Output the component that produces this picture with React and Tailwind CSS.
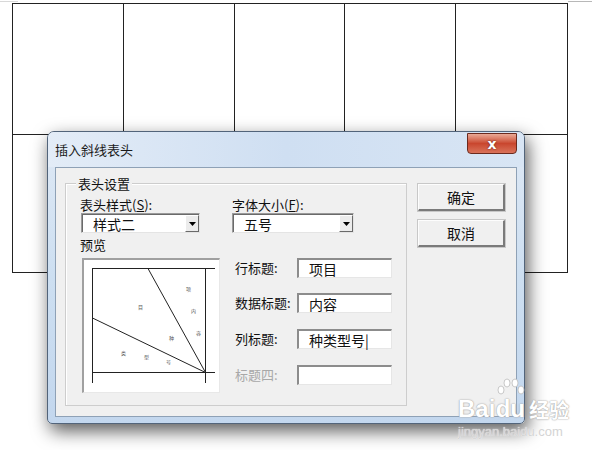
import React from "react";

const cjk = { fontFamily: '"Noto Sans CJK SC", "Noto Sans", sans-serif' };

function Combo({ width, text }) {
  return (
    <div
      className="flex h-[20px] border-t border-l border-t-[#9a9a9a] border-l-[#9a9a9a] border-b border-r border-b-[#e4e4e4] border-r-[#e4e4e4] bg-white"
      style={{ width }}
    >
      <div className="flex flex-1 items-center border-t border-l border-t-[#6a6a6a] border-l-[#6a6a6a]">
        <span className="pl-[10px] text-[14px] leading-[16px] text-[#111]">{text}</span>
        <div className="ml-auto flex h-full w-[14px] items-center justify-center border-t border-l border-t-white border-l-white border-b border-r border-b-[#6a6a6a] border-r-[#6a6a6a] bg-[#ececec]">
          <svg width="7" height="4" viewBox="0 0 7 4">
            <polygon points="0,0 7,0 3.5,4" fill="#000" />
          </svg>
        </div>
      </div>
    </div>
  );
}

function Field({ label, value, disabled, mt }) {
  return (
    <div className="flex items-center" style={{ marginTop: mt }}>
      <span
        className={`w-[62px] shrink-0 whitespace-nowrap text-[13px] leading-[16px] ${disabled ? "text-[#a8a8a8]" : "text-[#111]"}`}
      >
        {label}
      </span>
      <div className="flex h-[20px] w-[95px] items-center border-t-2 border-l-2 border-t-[#8c8c8c] border-l-[#8c8c8c] border-b border-r border-b-[#e6e6e6] border-r-[#e6e6e6] bg-white">
        <span className="pl-[10px] text-[14px] leading-[16px] text-[#111]">{value}</span>
      </div>
    </div>
  );
}

function Btn({ children, mt }) {
  return (
    <div
      className="flex h-[27px] w-[87px] items-center justify-center border-t border-l border-t-[#fdfdfd] border-l-[#fdfdfd] border-b-2 border-r-2 border-b-[#7a7a7a] border-r-[#7a7a7a] bg-[#f0f0f0] text-[14px] leading-[16px] text-[#111] shadow-[0_0_0_1px_#c8c8c8]"
      style={{ marginTop: mt }}
    >
      {children}
    </div>
  );
}

function Preview() {
  const marks = [
    [102, 31, "项"],
    [54, 49, "目"],
    [107, 53, "内"],
    [112, 75, "容"],
    [85, 80, "种"],
    [37, 95, "类"],
    [60, 99, "型"],
    [82, 104, "号"],
  ];
  return (
    <div className="ml-[2px] mt-[5px] h-[135px] w-[138px] border-t-2 border-l-2 border-t-[#a0a0a0] border-l-[#a0a0a0] border-b border-r border-b-[#e8e8e8] border-r-[#e8e8e8] bg-white">
      <svg width="135" height="132" viewBox="0 0 135 132">
        <g stroke="#222" strokeWidth="1" fill="none">
          <line x1="8.5" y1="8" x2="8.5" y2="123" />
          <line x1="8" y1="8.5" x2="131" y2="8.5" />
          <line x1="121.5" y1="8" x2="121.5" y2="123" />
          <line x1="8" y1="112.5" x2="131" y2="112.5" />
          <line x1="121.5" y1="112.5" x2="64" y2="8.5" />
          <line x1="121.5" y1="112.5" x2="8.5" y2="58" />
        </g>
        {marks.map(([x, y, t], i) => (
          <text key={i} x={x} y={y} fontSize="5" fill="#555" style={cjk}>
            {t}
          </text>
        ))}
      </svg>
    </div>
  );
}

export default function App() {
  return (
    <div className="relative h-[450px] w-[600px] overflow-hidden bg-white" style={cjk}>
      {/* top decorations */}
      <div className="flex h-[3px] items-start justify-between">
        <div className="mt-[1px] h-px w-[18px] bg-[#d8d8d8]" />
        <div className="mr-[8px] mt-[1px] h-px w-[24px] bg-[#b8b8b8]" />
      </div>

      {/* table */}
      <div className="ml-[12px] grid w-[556px] grid-cols-5 border border-[#222]">
        {Array.from({ length: 10 }).map((_, i) => (
          <div
            key={i}
            className={`${i < 5 ? "h-[131px] border-b border-b-[#222]" : "h-[137px]"} ${i % 5 !== 4 ? "border-r border-r-[#222]" : ""}`}
          />
        ))}
      </div>

      {/* dialog */}
      <div className="absolute left-[47px] top-[131px] flex h-[293px] w-[478px] flex-col rounded-t-[7px] rounded-b-[5px] border border-[#52647a] bg-gradient-to-b from-[#dfe9f5] via-[#cddff1] to-[#c3d7ee] shadow-[3px_7px_18px_rgba(0,0,0,0.65)]">
        <div className="flex h-[35px] items-start justify-between rounded-t-[6px] bg-gradient-to-r from-[#e3ecf7] via-[#cfdff2] to-[#d8e5f4] pl-[7px]">
          <span className="mt-[10px] text-[13px] leading-[16px] text-[#1a1a1a]">插入斜线表头</span>
          <div className="mr-[7px] mt-[1px] flex h-[21px] w-[50px] items-center justify-center rounded-b-[4px] border border-[#6b2a1e] bg-gradient-to-b from-[#e9a996] via-[#c9462e] to-[#d9725a]">
            <span
              className="text-[14px] font-bold leading-[14px] text-white"
              style={{ fontFamily: '"DejaVu Sans", sans-serif', textShadow: "0 0 2px #5a1a10" }}
            >
              x
            </span>
          </div>
        </div>

        <div className="mx-[7px] mb-[6px] flex flex-1 items-start border border-[#8ea1b6] bg-[#f0f0f0] pl-[9px] pt-[15px]">
          {/* group box */}
          <div className="relative h-[223px] w-[342px] border border-[#cdcdcd] pl-[14px] pt-[13px] shadow-[inset_1px_1px_0_#fff]">
            <span className="absolute left-[10px] top-[-8px] bg-[#f0f0f0] px-[2px] text-[13px] leading-[16px] text-[#111]">
              表头设置
            </span>
            <div className="flex">
              <div className="w-[152px]">
                <div className="text-[13px] leading-[16px] text-[#111]">
                  表头样式(<u>S</u>):
                </div>
                <div className="ml-[1px]">
                  <Combo width={119} text="样式二" />
                </div>
              </div>
              <div>
                <div className="text-[13px] leading-[16px] text-[#111]">
                  字体大小(<u>F</u>):
                </div>
                <Combo width={122} text="五号" />
              </div>
            </div>
            <div className="mt-[4px] flex">
              <div className="w-[152px]">
                <div className="text-[13px] leading-[16px] text-[#111]">预览</div>
                <Preview />
              </div>
              <div className="pl-[3px] pt-[21px]">
                <Field label="行标题:" value="项目" mt={0} />
                <Field label="数据标题:" value="内容" mt={15} />
                <Field label="列标题:" value="种类型号|" mt={16} />
                <Field label="标题四:" value="" disabled mt={16} />
              </div>
            </div>
          </div>

          {/* buttons */}
          <div className="ml-[11px] mt-[1px] flex flex-col">
            <Btn mt={0}>确定</Btn>
            <Btn mt={9}>取消</Btn>
          </div>
        </div>
      </div>

      {/* watermark */}
      <div className="pointer-events-none absolute left-[458px] top-[378px] flex flex-col">
        <div className="flex items-end">
          <span
            className="text-[24px] font-bold leading-[26px] text-white"
            style={{ fontFamily: '"Liberation Sans", sans-serif', textShadow: "0 0 1px #9a9a9a, 0 0 2px #b0b0b0" }}
          >
            Bai
          </span>
          <div className="relative flex flex-col items-center">
            <svg width="30" height="20" viewBox="0 0 30 20" className="-mb-[2px]">
              <g fill="#fff" stroke="#bbb" strokeWidth="0.8">
                <ellipse cx="6" cy="12" rx="3" ry="4" />
                <ellipse cx="12" cy="5" rx="3" ry="4" />
                <ellipse cx="20" cy="5" rx="3" ry="4" />
                <ellipse cx="26" cy="12" rx="3" ry="4" />
              </g>
            </svg>
            <span
              className="text-[24px] font-bold leading-[26px] text-white"
              style={{ fontFamily: '"Liberation Sans", sans-serif', textShadow: "0 0 1px #9a9a9a, 0 0 2px #b0b0b0" }}
            >
              du
            </span>
          </div>
          <span
            className="ml-[4px] text-[20px] font-bold leading-[24px] text-white"
            style={{ textShadow: "0 0 1px #9a9a9a, 0 0 2px #b0b0b0" }}
          >
            经验
          </span>
        </div>
        <span
          className="mt-[2px] text-[13px] leading-[15px] text-[#d4d4d4]"
          style={{ fontFamily: '"Liberation Sans", sans-serif', textShadow: "0 0 1px #fff" }}
        >
          jingyan.baidu.com
        </span>
      </div>
    </div>
  );
}
